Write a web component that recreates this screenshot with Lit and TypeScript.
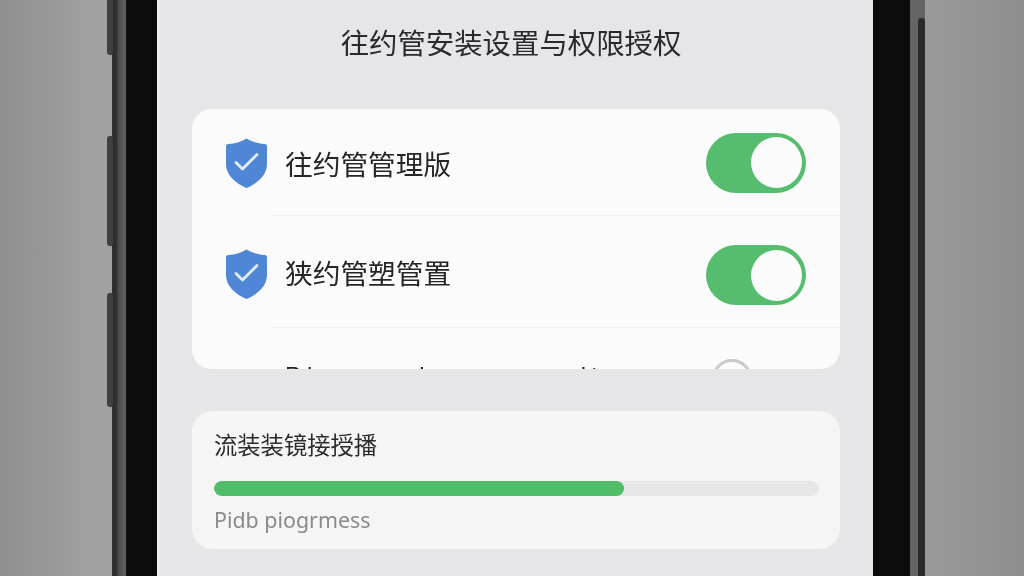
import { LitElement, html, css, svg } from "lit";
import { customElement } from "lit/decorators.js";

const shield = svg`<svg class="shield" viewBox="0 0 41 50" width="41" height="50">
  <path d="M20.5 0.5 C26 4 32.5 5.5 38.5 6 C40.2 6.2 41 7 41 8.5 L41 26 C41 37 32 45 20.5 50 C9 45 0 37 0 26 L0 8.5 C0 7 .8 6.2 2.5 6 C8.5 5.5 15 4 20.5 .5 Z" fill="#4f87d6"/>
  <path d="M10 24.5 L16.5 31 L31 16.5" fill="none" stroke="#e4edf8" stroke-width="2.8" stroke-linecap="round" stroke-linejoin="round"/>
</svg>`;

@customElement("app-root")
export class AppRoot extends LitElement {
  static styles = css`
    :host { display: block; width: 1024px; height: 576px; overflow: hidden; font-family: "Noto Sans CJK SC", "Noto Sans", sans-serif; }
    .page { height: 576px; background: linear-gradient(90deg, #8f8f8f 0, #a2a2a2 100px, #a0a0a0 112px, #9a9a9a 925px, #8e8e8e 1024px); display: flex; padding-left: 112px; position: relative; box-sizing: border-box; filter: blur(0.35px); }
    .rim { width: 14px; background: linear-gradient(90deg, #2e2e2e 0 30%, #4a4a4a 45%, #626262 100%); flex: none; }
    .rim.right { width: 15px; background: #646464; }
    .bezel { width: 31px; background: #0c0c0c; flex: none; }
    .bezel.right { width: 37px; }
    .screen { width: 716px; flex: none; box-sizing: border-box; height: 576px; overflow: hidden; background: #e6e6e9; box-shadow: inset 3px 0 3px -1px #f3f3f5; padding: 0 33px 0 35px; display: flex; flex-direction: column; }
    .title { height: 109px; box-sizing: border-box; padding: 21px 10px 0 0; margin: 0; font-size: 28.4px; line-height: 42px; font-weight: 400; color: #2a2a2c; text-align: center; white-space: nowrap; }
    .card1 { height: 260px; background: #fbfbfb; border-radius: 20px; overflow: hidden; flex: none; }
    .row { display: flex; align-items: center; box-sizing: border-box; padding-left: 34px; padding-right: 34px; gap: 18px; position: relative; }
    .row.a { height: 107px; }
    .row.b { height: 112px; }
    .row.b .toggle { margin-top: 6px; }
    .row.b .shield { margin-top: 4px; }
    .row.c { height: 60px; align-items: flex-start; padding-top: 33px; }
    .row.a::after, .row.b::after { content: ""; position: absolute; left: 80px; right: 0; bottom: 0; height: 1px; background: #efeff0; }
    .shield { flex: none; }
    .label { flex: 1; font-size: 27.7px; line-height: 40px; color: #262628; }
    .toggle { width: 100px; height: 60px; border-radius: 30px; background: #56bd6e; flex: none; display: flex; align-items: center; justify-content: flex-end; padding-right: 4px; box-sizing: border-box; }
    .knob { width: 51px; height: 51px; border-radius: 50%; background: #fbfbfb; }
    .partial { flex: 1; display: flex; font-size: 24px; line-height: 30px; color: #222; margin-left: 59px; font-family: "Liberation Sans", sans-serif; }
    .partial .t1 { margin-left: 6px; }
    .partial .t2 { margin-left: 107px; }
    .partial .t3 { margin-left: 156px; }
    .partial .t4 { margin-left: 5px; }
    .off { width: 40px; height: 40px; border-radius: 50%; border: 3px solid #c9c9c9; background: #fbfbfb; box-sizing: border-box; margin: -2px 54px 0 0; flex: none; }
    .card2 { margin-top: 42px; height: 138px; background: #f5f5f6; border-radius: 20px; box-sizing: border-box; padding: 16px 21px 0 22px; flex: none; }
    .c2t { font-size: 23.3px; line-height: 34px; color: #2c2c2e; }
    .track { margin-top: 20px; height: 15px; border-radius: 8px; background: #e7e7e8; overflow: hidden; }
    .fill { height: 100%; border-radius: 8px; background: #50bd68; }
    .sub { margin-top: 9px; font-size: 21.4px; line-height: 30px; color: #8a8a8c; font-family: "Noto Sans", sans-serif; }
    .btn { position: absolute; background: #404040; border-radius: 3px; width: 7px; box-shadow: inset -1px 0 0 #2a2a2a; }
    .b1 { left: 107px; top: -4px; height: 59px; }
    .b2 { left: 107px; top: 136px; height: 110px; }
    .b3 { left: 107px; top: 293px; height: 114px; }
    .b4 { left: 918px; top: 18px; height: 570px; background: #2b2b2d; box-shadow: none; }
  `;

  render() {
    return html`<div class="page">
      <div class="rim"></div>
      <div class="bezel"></div>
      <div class="screen">
        <h1 class="title">往约管安装设置与权限授权</h1>
        <div class="card1">
          <div class="row a">${shield}<span class="label">往约管管理版</span><div class="toggle"><div class="knob"></div></div></div>
          <div class="row b">${shield}<span class="label">狭约管塑管置</span><div class="toggle"><div class="knob"></div></div></div>
          <div class="row c"><div class="partial"><span>P</span><span class="t1">i</span><span class="t2">i</span><span class="t3">i</span><span class="t4">t</span></div><div class="off"></div></div>
        </div>
        <div class="card2">
          <div class="c2t">流装装镜接授播</div>
          <div class="track"><div class="fill" style="width:${(410 / 605) * 100}%"></div></div>
          <div class="sub">Pidb piogrmess</div>
        </div>
      </div>
      <div class="bezel right"></div>
      <div class="rim right"></div>
      <div class="btn b1"></div>
      <div class="btn b2"></div>
      <div class="btn b3"></div>
      <div class="btn b4"></div>
    </div>`;
  }
}
